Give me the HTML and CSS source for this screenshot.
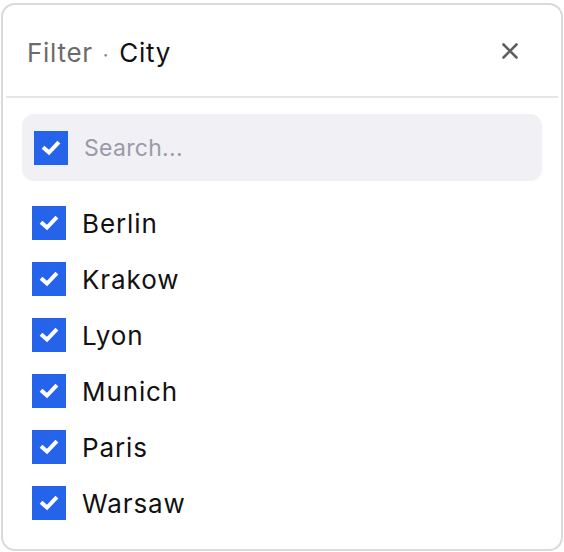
FILE: index.html
```html
<!doctype html>
<html lang="en">
<head>
	<meta charset="UTF-8">
	<title>Filter</title>
	<link rel="stylesheet" href="styles.css">
</head>
<body>
	<div class="panel">
		<div class="panel_head">
			<div class="panel_title"><span class="muted">Filter</span> <span class="dot">·</span> City</div>
			<svg class="close" width="16" height="16" viewBox="0 0 16 16"><path d="M1.5 1.5L14.5 14.5M14.5 1.5L1.5 14.5" stroke="#5f5f5f" stroke-width="2.6" stroke-linecap="round"/></svg>
		</div>
		<div class="panel_body">
			<div class="search">
				<span class="box"><svg width="34" height="34" viewBox="0 0 34 34"><path d="M10.5 17.5L15 21.5L23.5 12.5" fill="none" stroke="#fff" stroke-width="4" stroke-linecap="square"/></svg></span>
				<span class="search_text">Search...</span>
			</div>
			<ul class="list">
				<li><span class="box"><svg width="34" height="34" viewBox="0 0 34 34"><path d="M10.5 17.5L15 21.5L23.5 12.5" fill="none" stroke="#fff" stroke-width="4" stroke-linecap="square"/></svg></span>Berlin</li>
				<li><span class="box"><svg width="34" height="34" viewBox="0 0 34 34"><path d="M10.5 17.5L15 21.5L23.5 12.5" fill="none" stroke="#fff" stroke-width="4" stroke-linecap="square"/></svg></span>Krakow</li>
				<li><span class="box"><svg width="34" height="34" viewBox="0 0 34 34"><path d="M10.5 17.5L15 21.5L23.5 12.5" fill="none" stroke="#fff" stroke-width="4" stroke-linecap="square"/></svg></span>Lyon</li>
				<li><span class="box"><svg width="34" height="34" viewBox="0 0 34 34"><path d="M10.5 17.5L15 21.5L23.5 12.5" fill="none" stroke="#fff" stroke-width="4" stroke-linecap="square"/></svg></span>Munich</li>
				<li><span class="box"><svg width="34" height="34" viewBox="0 0 34 34"><path d="M10.5 17.5L15 21.5L23.5 12.5" fill="none" stroke="#fff" stroke-width="4" stroke-linecap="square"/></svg></span>Paris</li>
				<li><span class="box"><svg width="34" height="34" viewBox="0 0 34 34"><path d="M10.5 17.5L15 21.5L23.5 12.5" fill="none" stroke="#fff" stroke-width="4" stroke-linecap="square"/></svg></span>Warsaw</li>
			</ul>
		</div>
	</div>
</body>
</html>
```

FILE: styles.css
```css
body, div, ul, li{
	margin: 0;
	padding: 0;
}
body{
	background-color: #fff;
	font-family: 'Inter', 'Noto Sans', sans-serif;
	color: #111;
}
ul{
	list-style: none;
}
.panel{
	box-sizing: border-box;
	margin: 3px 1px 0 1px;
	width: 562px;
	height: 548px;
	border: 2px solid #dadada;
	border-radius: 14px;
	background-color: #fff;
}
.panel_head{
	display: flex;
	align-items: center;
	justify-content: space-between;
	height: 91px;
	margin: 0 3px;
	padding: 0 40px 0 21px;
	border-bottom: 2px solid #e6e6e6;
}
.panel_title{
	font-size: 26px;
	letter-spacing: 0.7px;
	color: #111;
	padding-top: 4px;
}
.panel_title .muted{
	color: #6b6b6b;
}
.panel_title .dot{
	color: #8a8a8a;
	font-size: 20px;
	margin: 0 2px;
}
.close{
	display: block;
}
.panel_body{
	padding: 16px 19px 0 19px;
}
.search{
	display: flex;
	align-items: center;
	height: 67px;
	padding-left: 12px;
	border-radius: 12px;
	background-color: #f0f0f5;
}
.box{
	display: block;
	width: 34px;
	height: 34px;
	background-color: #2563eb;
	flex-shrink: 0;
}
.box svg{
	display: block;
}
.search_text{
	margin-left: 16px;
	font-size: 23px;
	letter-spacing: 0.3px;
	color: #9a9aa8;
}
.list{
	padding: 25px 0 0 10px;
}
.list > li{
	display: flex;
	align-items: center;
	gap: 16px;
	height: 34px;
	margin-bottom: 22px;
	font-size: 26px;
	letter-spacing: 0.9px;
	color: #111;
}
```
